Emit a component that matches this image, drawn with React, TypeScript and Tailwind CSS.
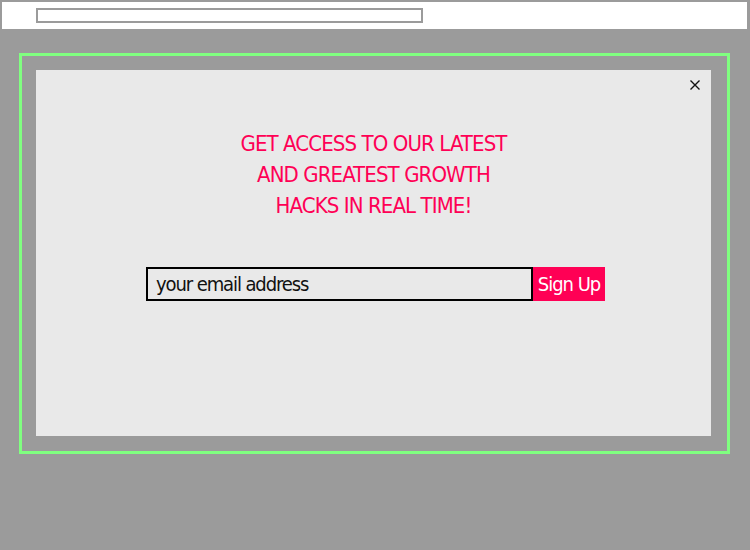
export default function App() {
  const font = { fontFamily: '"DejaVu Sans Condensed", "Liberation Sans", sans-serif' };
  return (
    <div className="w-[750px] h-[550px] bg-[#9b9b9b] pt-[2px] overflow-hidden" style={font}>
      {/* browser-ish top bar */}
      <div className="ml-[2px] mr-[3px] h-[27px] bg-white pt-[6px] pl-[34px]">
        <div className="w-[387px] h-[15px] border-2 border-[#9b9b9b] bg-white" />
      </div>

      <div className="ml-[19px] mt-[24px] w-[711px] h-[401px] border-[3px] border-[#80ff80] p-[14px] pr-[16px]">
        <div className="relative h-[366px] bg-[#e9e9e9] flex flex-col items-center">
          <button className="absolute right-[11px] top-[10px] w-[10px] h-[10px]" aria-label="close">
            <svg viewBox="0 0 10 10" className="w-[10px] h-[10px]">
              <path d="M0.5 0.5 L9.5 9.5 M9.5 0.5 L0.5 9.5" stroke="#111" strokeWidth="1.4" />
            </svg>
          </button>

          <h1 className="mt-[58px] text-[22px] leading-[31px] tracking-[-0.9px] text-[#ff0055] text-center uppercase">
            Get access to our latest
            <br />
            and greatest growth
            <br />
            hacks in real time!
          </h1>

          <form className="mt-[46px] ml-[4px] flex" onSubmit={(e) => e.preventDefault()}>
            <input
              type="email"
              placeholder="your email address"
              className="w-[387px] h-[34px] border-2 border-black bg-transparent px-[8px] text-[20px] tracking-[-1.1px] text-black placeholder:text-[#111] outline-none"
            />
            <button className="w-[72px] h-[34px] bg-[#ff0055] text-white text-[20px] tracking-[-1px] leading-none whitespace-nowrap">
              Sign Up
            </button>
          </form>
        </div>
      </div>
    </div>
  );
}
